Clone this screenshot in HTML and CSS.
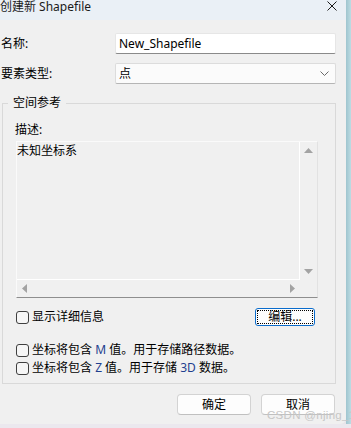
FILE: index.html
```html
<!DOCTYPE html>
<html lang="zh">
<head>
<meta charset="utf-8">
<title>创建新 Shapefile</title>
<link rel="stylesheet" href="styles.css">
</head>
<body>
<div class="screen">
  <div class="top">
    <div class="dialog">
      <div class="titlebar">
        <span class="title">创建新 Shapefile</span>
        <svg class="close" width="10" height="10" viewBox="0 0 10 10"><path d="M0.5 0.5L9.5 9.5M9.5 0.5L0.5 9.5" stroke="#1a1a1a" stroke-width="1" fill="none"/></svg>
      </div>
      <div class="content">
        <div class="row row-name">
          <span class="lbl">名称:</span>
          <div class="input">New_Shapefile</div>
        </div>
        <div class="row row-type">
          <span class="lbl">要素类型:</span>
          <div class="select">
            <span>点</span>
            <svg class="chev" width="9" height="5" viewBox="0 0 9 5"><path d="M0.5 0.5L4.5 4.5L8.5 0.5" stroke="#6a6a6a" stroke-width="1" fill="none"/></svg>
          </div>
        </div>
        <fieldset class="group">
          <legend>空间参考</legend>
          <div class="desc-label">描述:</div>
          <div class="textbox">
            <div class="text-cell">未知坐标系</div>
            <div class="vscroll">
              <svg width="9" height="5" viewBox="0 0 9 5"><polygon points="4.5,0 9,5 0,5" fill="#a3a3a3"/></svg>
              <svg width="9" height="5" viewBox="0 0 9 5"><polygon points="0,0 9,0 4.5,5" fill="#a3a3a3"/></svg>
            </div>
            <div class="hscroll">
              <svg width="5" height="9" viewBox="0 0 5 9"><polygon points="5,0 5,9 0,4.5" fill="#a3a3a3"/></svg>
              <svg width="5" height="9" viewBox="0 0 5 9"><polygon points="0,0 5,4.5 0,9" fill="#a3a3a3"/></svg>
            </div>
            <div class="corner"></div>
          </div>
          <div class="detail-row">
            <label class="check"><span class="box"></span><span class="txt">显示详细信息</span></label>
            <button class="edit"><span class="focus">编辑...</span></button>
          </div>
          <label class="check opt opt-m"><span class="box"></span><span class="txt">坐标将包含 <span class="lat">M</span> 值。用于存储路径数据。</span></label>
          <label class="check opt"><span class="box"></span><span class="txt">坐标将包含 <span class="lat">Z</span> 值。用于存储 <span class="lat">3D</span> 数据。</span></label>
        </fieldset>
        <div class="actions">
          <button class="btn">确定</button>
          <button class="btn">取消</button>
        </div>
      </div>
    </div>
    <div class="edge"></div>
  </div>
  <div class="below"></div>
  <div class="watermark">CSDN @njing_111</div>
</div>
</body>
</html>
```

FILE: styles.css
```css
* { box-sizing: border-box; }
html, body { margin: 0; padding: 0; }
body {
  width: 351px;
  height: 428px;
  overflow: hidden;
  background: #e8e6ea;
  font-family: "Noto Sans", "Noto Sans CJK SC", sans-serif;
  font-size: 12px;
  color: #000;
}
.screen { position: relative; width: 351px; height: 428px; display: flex; flex-direction: column; }
.top { display: flex; height: 424px; }
.dialog {
  width: 346px;
  background: #f0f0f0;
  display: flex;
  flex-direction: column;
  border-bottom-right-radius: 6px;
}
.edge {
  flex: 1;
  background: linear-gradient(to right, #9fc5cf, #bcdce3);
}
.below { flex: 1; background: #ebe8ee; }

.titlebar {
  height: 20px;
  background: #eaf0f6;
  display: flex;
  justify-content: space-between;
  align-items: flex-start;
}
.title { line-height: 14px; font-size: 12px; color: #1a1a1a; }
.close { margin: 1px 9px 0 0; }

.content { display: flex; flex-direction: column; }
.row { display: flex; align-items: center; height: 21px; }
.row-name { margin-top: 13px; }
.row-type { margin-top: 9px; }
.lbl { width: 115px; padding-left: 1px; line-height: 16px; }
.input {
  width: 221px;
  height: 21px;
  background: #fff;
  border: 1px solid #e6e6e6;
  border-bottom-color: #8a8a8a;
  border-radius: 2px;
  padding: 0 3px;
  line-height: 19px;
}
.select {
  width: 221px;
  height: 21px;
  background: #fbfbfb;
  border: 1px solid #dcdcdc;
  border-bottom-color: #b5b5b5;
  border-radius: 2px;
  padding: 0 3px;
  line-height: 19px;
  display: flex;
  justify-content: space-between;
  align-items: center;
}
.chev { margin-right: 3px; }

.group {
  margin: 11px 0 0 2px;
  width: 334px;
  padding: 0 0 6px 0;
  border: 1px solid #d9d9d9;
  min-width: 0;
}
.group legend {
  margin-left: 5px;
  padding: 0 5px;
  line-height: 16px;
  font-size: 12px;
}
.desc-label { margin: 11px 0 0 12px; line-height: 16px; }
.textbox {
  margin: 3px 0 0 13px;
  width: 302px;
  height: 157px;
  border: 1px solid #e2e2e2;
  border-top-color: #fafafa;
  border-left-color: #fafafa;
  border-bottom-color: #8e8e8e;
  display: grid;
  grid-template-columns: 283px 17px;
  grid-template-rows: 138px 17px;
  background: #f0f0f0;
}
.text-cell {
  border-right: 1px solid #fff;
  border-bottom: 1px solid #fff;
  padding: 1px 0 0 0;
  line-height: 16px;
}
.vscroll {
  display: flex;
  flex-direction: column;
  justify-content: space-between;
  align-items: center;
  padding: 6px 0;
}
.vscroll svg, .hscroll svg { display: block; }
.hscroll {
  display: flex;
  justify-content: space-between;
  align-items: center;
  padding: 0 5px;
}
.detail-row {
  margin: 10px 0 0 13px;
  width: 300px;
  height: 18px;
  display: flex;
  justify-content: space-between;
  align-items: center;
}
.check {
  display: flex;
  align-items: center;
  gap: 3px;
  line-height: 18px;
  height: 18px;
}
.txt { white-space: nowrap; }
.box {
  width: 13px;
  height: 13px;
  border: 1px solid #3f3f3f;
  border-radius: 3px;
  background: #f6f6f6;
  flex: none;
}
.opt { margin-left: 13px; }
.opt-m { margin-top: 15px; }
.lat { color: #1f3f8f; }
.edit {
  width: 60px;
  height: 18px;
  margin-right: 1px;
  padding: 1px;
  border: 1.5px solid #0a6ccc;
  border-radius: 3px;
  background: #fdfdfd;
  font: inherit;
  display: flex;
}
.focus {
  flex: 1;
  border: 1px dotted #000;
  line-height: 12px;
  text-align: center;
}
.actions {
  margin: 10px 11px 0 0;
  display: flex;
  justify-content: flex-end;
  gap: 10px;
}
.btn {
  width: 74px;
  height: 21px;
  background: #fdfdfd;
  border: 1px solid #d3d3d3;
  border-bottom-color: #c0c0c0;
  border-radius: 4px;
  font: inherit;
  line-height: 18px;
  padding: 0;
  color: #000;
}
.watermark {
  position: absolute;
  left: 267px;
  top: 409px;
  font-family: "Liberation Sans", sans-serif;
  font-size: 11.5px;
  color: #c6c6c6;
  white-space: nowrap;
  letter-spacing: 0.3px;
}
```
